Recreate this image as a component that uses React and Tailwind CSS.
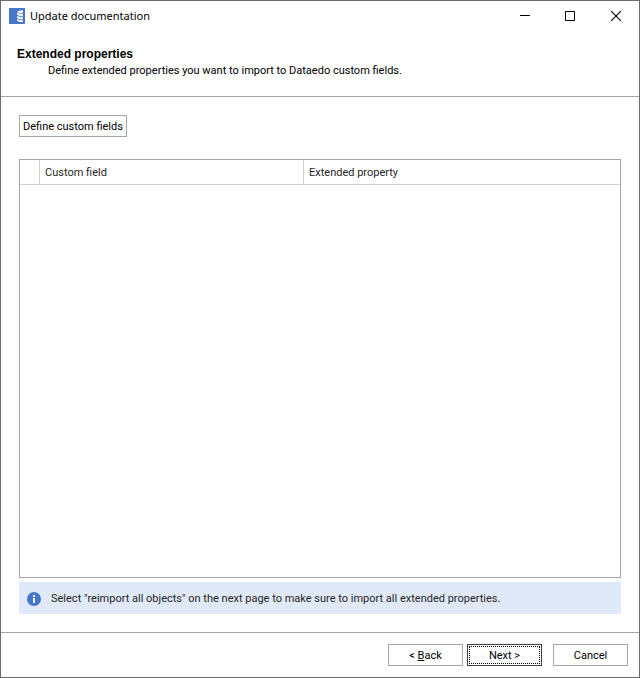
const columns = ["Custom field", "Extended property"];

function Logo() {
  return (
    <svg width="16" height="16" viewBox="0 0 16 16" aria-hidden="true">
      <rect width="16" height="16" fill="#4677c8" />
      <path d="M8.4 3.2 13.8 2v3.4L9.4 5z" fill="#fff" />
      <path d="M8 4.6c1 1.2 3 1.6 5.8 1.4v2.4C11 8.4 9 7.8 8 6.6z" fill="#fff" />
      <path d="M8 7.8c1 1 3 1.4 5.8 1.4v2.2C11 11.2 9 10.8 8 9.8z" fill="#fff" />
      <path d="M8 10.8c1 1 3 1.4 5.8 1.4v2C11 14 9 13.6 8 12.4z" fill="#fff" />
    </svg>
  );
}

function InfoIcon() {
  return (
    <svg width="14" height="14" viewBox="0 0 14 14" aria-hidden="true">
      <circle cx="7" cy="7" r="7" fill="#4677c8" />
      <path d="M6 3h2v2H6zM6 6h2v5H6z" fill="#fff" />
    </svg>
  );
}

function TitleBar() {
  return (
    <div className="flex h-[29px] items-center justify-between pl-2">
      <div className="flex items-center gap-[5px]">
        <Logo />
        <span className="font-['Noto_Sans',sans-serif] text-[11px] leading-4">
          Update documentation
        </span>
      </div>
      <div className="flex h-full">
        <button aria-label="Minimize" className="flex w-[45px] items-center justify-center">
          <svg width="10" height="10" viewBox="0 0 10 10">
            <path d="M0 4.5h10" stroke="#000" />
          </svg>
        </button>
        <button aria-label="Maximize" className="flex w-[46px] items-center justify-center">
          <svg width="10" height="10" viewBox="0 0 10 10">
            <path d="M.5.5h9v9h-9z" fill="none" stroke="#000" />
          </svg>
        </button>
        <button aria-label="Close" className="flex w-[46px] items-center justify-center">
          <svg width="10" height="10" viewBox="0 0 10 10">
            <path d="M0 0l10 10M10 0L0 10" stroke="#000" strokeWidth="1.1" />
          </svg>
        </button>
      </div>
    </div>
  );
}

export default function App() {
  return (
    <div className="flex min-h-screen flex-col border border-[#6b6b6b] bg-white font-['Roboto',sans-serif] text-[11px] leading-4 text-black">
      <TitleBar />

      <header className="border-b border-[#a6a6a6] px-4 pt-4 pb-4">
        <h1 className="font-['Liberation_Sans',sans-serif] text-[12px] leading-4 font-bold">
          Extended properties
        </h1>
        <p className="pl-[31px] leading-[18px]">
          Define extended properties you want to import to Dataedo custom fields.
        </p>
      </header>

      <main className="flex flex-1 flex-col px-[18px] py-[18px]">
        <button className="h-[22px] self-start border border-[#a6a6a6] px-[3px] pt-0.5 whitespace-nowrap">
          Define custom fields
        </button>

        {/* Mapping grid */}
        <div className="mt-[22px] flex-1 border border-[#a6a6a6] text-[#262626]">
          <table className="w-full table-fixed border-separate border-spacing-0 text-left">
            <thead>
              <tr className="h-[25px]">
                <td className="w-5 border-r border-b border-[#d0d0d0]" />
                <th className="w-[44%] border-r border-b border-[#d0d0d0] px-[5px] pt-0.5 font-normal">
                  {columns[0]}
                </th>
                <th className="border-b border-[#d0d0d0] px-[5px] pt-0.5 font-normal">
                  {columns[1]}
                </th>
              </tr>
            </thead>
            <tbody />
          </table>
        </div>

        <div className="mt-1 flex h-8 items-center gap-[10px] bg-[#dfe9f8] px-2 pt-0.5 text-[#262626]">
          <InfoIcon />
          <p>
            Select "reimport all objects" on the next page to make sure to import all extended
            properties.
          </p>
        </div>
      </main>

      <footer className="flex justify-end border-t border-[#a6a6a6] px-[11px] py-[11px]">
        <button className="h-[22px] w-[75px] border border-[#a6a6a6] pt-0.5">
          &lt; <span className="underline">B</span>ack
        </button>
        <button className="ml-1 h-[22px] w-[75px] border border-[#404040] p-px">
          <span className="flex h-full items-center justify-center border border-dotted border-black pt-0.5">
            Next &gt;
          </span>
        </button>
        <button className="ml-[11px] h-[22px] w-[75px] border border-[#a6a6a6] pt-0.5">
          Cancel
        </button>
      </footer>
    </div>
  );
}
